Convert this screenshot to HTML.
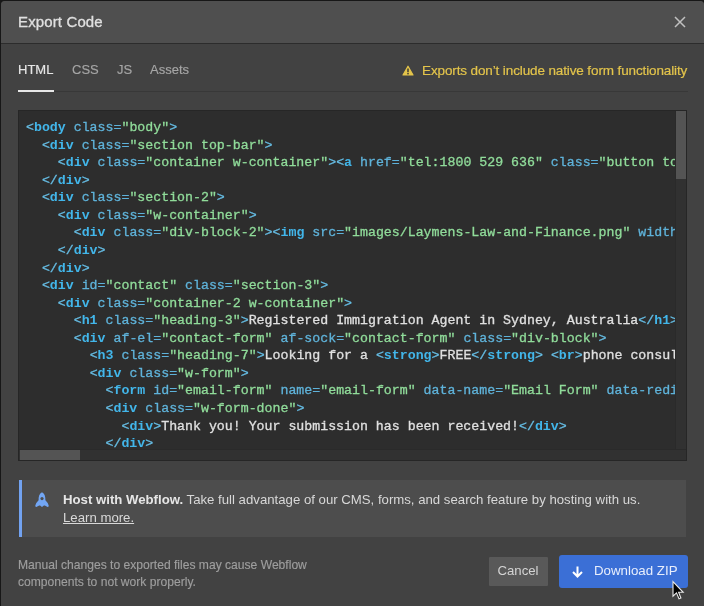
<!DOCTYPE html>
<html><head><meta charset="utf-8">
<style>
*{box-sizing:border-box;margin:0;padding:0}
html,body{width:704px;height:606px;overflow:hidden;background:#171717}
body{position:relative;font-family:"Liberation Sans",sans-serif}
.modal{position:absolute;left:1px;top:1px;width:703px;height:605px;background:#424242;border-radius:4px 4px 0 0;overflow:hidden}
.hdr{position:absolute;left:0;top:0;width:703px;height:43px;background:#4f4f4f;border-bottom:1px solid #2c2c2c}
.a{position:absolute;white-space:nowrap}
.title{left:18.3px;top:13.9px;font-size:15px;letter-spacing:0.13px;-webkit-text-stroke:0.3px #e0e0e0;color:#e0e0e0;line-height:16px}
.tab{top:61.7px;font-size:13px;line-height:16px;color:#a6a6a6;-webkit-text-stroke:0.15px #a6a6a6}
.tab.on{color:#e6e6e6;-webkit-text-stroke:0.15px #e6e6e6}
.tabline{position:absolute;left:18px;top:91px;width:670px;height:1px;background:#383838}
.tabul{position:absolute;left:18px;top:90px;width:36px;height:2px;background:#e8e8e8}
.warn{left:421.8px;top:62.6px;-webkit-text-stroke:0.2px #e3c44b;font-size:13.5px;letter-spacing:-0.12px;line-height:16px;color:#e3c44b}
.code{position:absolute;left:18px;top:110px;width:669px;height:351px;background:#2d2d2d;border:1px solid #262626;overflow:hidden}
pre{position:absolute;left:7px;top:7.5px;font-family:"Liberation Mono",monospace;font-size:13.25px;line-height:17.56px;color:#e0e0e0}
.p{color:#66bde4}
.t{color:#42b6ea;font-weight:bold}
.n{color:#5fb3da}
.s{color:#90dc9a}
.vs{position:absolute;right:0;top:0;width:11px;height:100%;background:#313131;border-left:1px solid #2a2a2a}
.vth{position:absolute;left:0;top:0;width:10px;height:67.8px;background:#545454}
.hs{position:absolute;left:0;bottom:0;width:100%;height:11px;background:#313131;border-top:1px solid #2a2a2a}
.hth{position:absolute;left:1px;top:0;width:60px;height:10px;background:#545454}
.host{position:absolute;left:19px;top:479.5px;width:667px;height:57.5px;background:#4d4d4d;border-left:3px solid #72a2f0}
.hosttxt{left:62.5px;top:491px;font-size:13.2px;line-height:18px;color:#d8d8d8}
.hosttxt b{color:#e6e6e6}
.learn{left:62.5px;top:509px;font-size:13.2px;line-height:18px;color:#d8d8d8;text-decoration:underline}
.foot{left:18px;top:556.8px;font-size:12.1px;line-height:17.3px;color:#9e9e9e;-webkit-text-stroke:0.15px #9e9e9e}
.cancel{position:absolute;left:489px;top:557px;width:59px;height:29px;background:#595959;border-radius:1px;color:#d4d4d4;font-size:13.2px;line-height:27.6px;padding-right:1px;text-align:center}
.dl{position:absolute;left:559px;top:555px;width:129px;height:33px;background:#3b6fd6;border-radius:3px;color:#e8eefc;font-size:13px;line-height:31.6px}
.a,pre,.cancel,.dl{will-change:transform}
pre{-webkit-text-stroke-width:0.3px}
.t{-webkit-text-stroke-width:0}
</style></head>
<body>
<div class="modal">
  <div class="hdr"></div>
</div>
<div class="a title">Export Code</div>
<svg class="a" style="left:673px;top:14.7px" width="14" height="14" viewBox="0 0 14 14"><path d="M2 2L12 12M12 2L2 12" stroke="#c0c0c0" stroke-width="1.5"/></svg>

<div class="a tab on" style="left:18px">HTML</div>
<div class="a tab" style="left:71.8px">CSS</div>
<div class="a tab" style="left:116.8px">JS</div>
<div class="a tab" style="left:149.8px">Assets</div>
<div class="tabline"></div>
<div class="tabul"></div>
<svg class="a" style="left:402px;top:65px" width="12" height="11" viewBox="0 0 12 11"><path d="M6 1.2L11 10H1Z" fill="#e3c44b" stroke="#e3c44b" stroke-width="1.2" stroke-linejoin="round"/><path d="M6 3.6V7.2" stroke="#303030" stroke-width="1.4"/><rect x="5.3" y="8" width="1.4" height="1.4" fill="#303030"/></svg>
<div class="a warn">Exports don’t include native form functionality</div>

<div class="code">
<pre><span class="p">&lt;</span><span class="t">body</span> <span class="n">class=</span><span class="s">"body"</span><span class="p">&gt;</span>
  <span class="p">&lt;</span><span class="t">div</span> <span class="n">class=</span><span class="s">"section top-bar"</span><span class="p">&gt;</span>
    <span class="p">&lt;</span><span class="t">div</span> <span class="n">class=</span><span class="s">"container w-container"</span><span class="p">&gt;&lt;</span><span class="t">a</span> <span class="n">href=</span><span class="s">"tel:1800 529 636"</span> <span class="n">class=</span><span class="s">"button top-bar"</span><span class="p">&gt;</span>
  <span class="p">&lt;/</span><span class="t">div</span><span class="p">&gt;</span>
  <span class="p">&lt;</span><span class="t">div</span> <span class="n">class=</span><span class="s">"section-2"</span><span class="p">&gt;</span>
    <span class="p">&lt;</span><span class="t">div</span> <span class="n">class=</span><span class="s">"w-container"</span><span class="p">&gt;</span>
      <span class="p">&lt;</span><span class="t">div</span> <span class="n">class=</span><span class="s">"div-block-2"</span><span class="p">&gt;&lt;</span><span class="t">img</span> <span class="n">src=</span><span class="s">"images/Laymens-Law-and-Finance.png"</span> <span class="n">width=</span><span class="s">"300"</span><span class="p">&gt;</span>
    <span class="p">&lt;/</span><span class="t">div</span><span class="p">&gt;</span>
  <span class="p">&lt;/</span><span class="t">div</span><span class="p">&gt;</span>
  <span class="p">&lt;</span><span class="t">div</span> <span class="n">id=</span><span class="s">"contact"</span> <span class="n">class=</span><span class="s">"section-3"</span><span class="p">&gt;</span>
    <span class="p">&lt;</span><span class="t">div</span> <span class="n">class=</span><span class="s">"container-2 w-container"</span><span class="p">&gt;</span>
      <span class="p">&lt;</span><span class="t">h1</span> <span class="n">class=</span><span class="s">"heading-3"</span><span class="p">&gt;</span>Registered Immigration Agent in Sydney, Australia<span class="p">&lt;/</span><span class="t">h1</span><span class="p">&gt;</span>
      <span class="p">&lt;</span><span class="t">div</span> <span class="n">af-el=</span><span class="s">"contact-form"</span> <span class="n">af-sock=</span><span class="s">"contact-form"</span> <span class="n">class=</span><span class="s">"div-block"</span><span class="p">&gt;</span>
        <span class="p">&lt;</span><span class="t">h3</span> <span class="n">class=</span><span class="s">"heading-7"</span><span class="p">&gt;</span>Looking for a <span class="p">&lt;</span><span class="t">strong</span><span class="p">&gt;</span>FREE<span class="p">&lt;/</span><span class="t">strong</span><span class="p">&gt;</span> <span class="p">&lt;</span><span class="t">br</span><span class="p">&gt;</span>phone consultation
        <span class="p">&lt;</span><span class="t">div</span> <span class="n">class=</span><span class="s">"w-form"</span><span class="p">&gt;</span>
          <span class="p">&lt;</span><span class="t">form</span> <span class="n">id=</span><span class="s">"email-form"</span> <span class="n">name=</span><span class="s">"email-form"</span> <span class="n">data&#45;name=</span><span class="s">"Email Form"</span> <span class="n">data-redirect=</span><span class="s">""</span><span class="p">&gt;</span>
          <span class="p">&lt;</span><span class="t">div</span> <span class="n">class=</span><span class="s">"w-form-done"</span><span class="p">&gt;</span>
            <span class="p">&lt;</span><span class="t">div</span><span class="p">&gt;</span>Thank you! Your submission has been received!<span class="p">&lt;/</span><span class="t">div</span><span class="p">&gt;</span>
          <span class="p">&lt;/</span><span class="t">div</span><span class="p">&gt;</span>
</pre>
<div class="vs"><div class="vth"></div></div>
<div class="hs"><div class="hth"></div></div>
</div>

<div class="host"></div>
<svg class="a" style="left:30px;top:488px" width="24" height="24" viewBox="0 0 24 24"><path d="M12 4.2C9.4 5.4 8.4 8.6 8.6 12.2Q6 14.6 5.3 17.6Q5.2 19.6 6.8 18.8L9.2 17.4H10.1L12 19L13.9 17.4H14.8L17.2 18.8Q18.8 19.6 18.7 17.6Q18 14.6 15.4 12.2C15.6 8.6 14.6 5.4 12 4.2Z" fill="#72a6f4"/><circle cx="12" cy="10.6" r="1.6" fill="#4d4d4d"/></svg>
<div class="a hosttxt"><b>Host with Webflow.</b> Take full advantage of our CMS, forms, and search feature by hosting with us.</div>
<div class="a learn">Learn more.</div>

<div class="a foot">Manual changes to exported files may cause Webflow<br>components to not work properly.</div>
<div class="cancel">Cancel</div>
<div class="dl"><svg class="a" style="left:12.6px;top:10.6px" width="11" height="12" viewBox="0 0 11 12"><path d="M5.5 0.5V10.5M1 6L5.5 10.5L10 6" stroke="#fff" stroke-width="2" fill="none"/></svg><span class="a" style="left:35.3px;top:0;font-size:13.3px">Download ZIP</span></div>
<svg class="a" style="left:672px;top:580px" width="14" height="21" viewBox="0 0 14 21"><path d="M1 1.6V16.2L4.5 12.9L7 18.8L8.9 18L6.6 12.3H11.2Z" fill="#000" stroke="#e8e8e8" stroke-width="1.1"/></svg>
</body></html>
